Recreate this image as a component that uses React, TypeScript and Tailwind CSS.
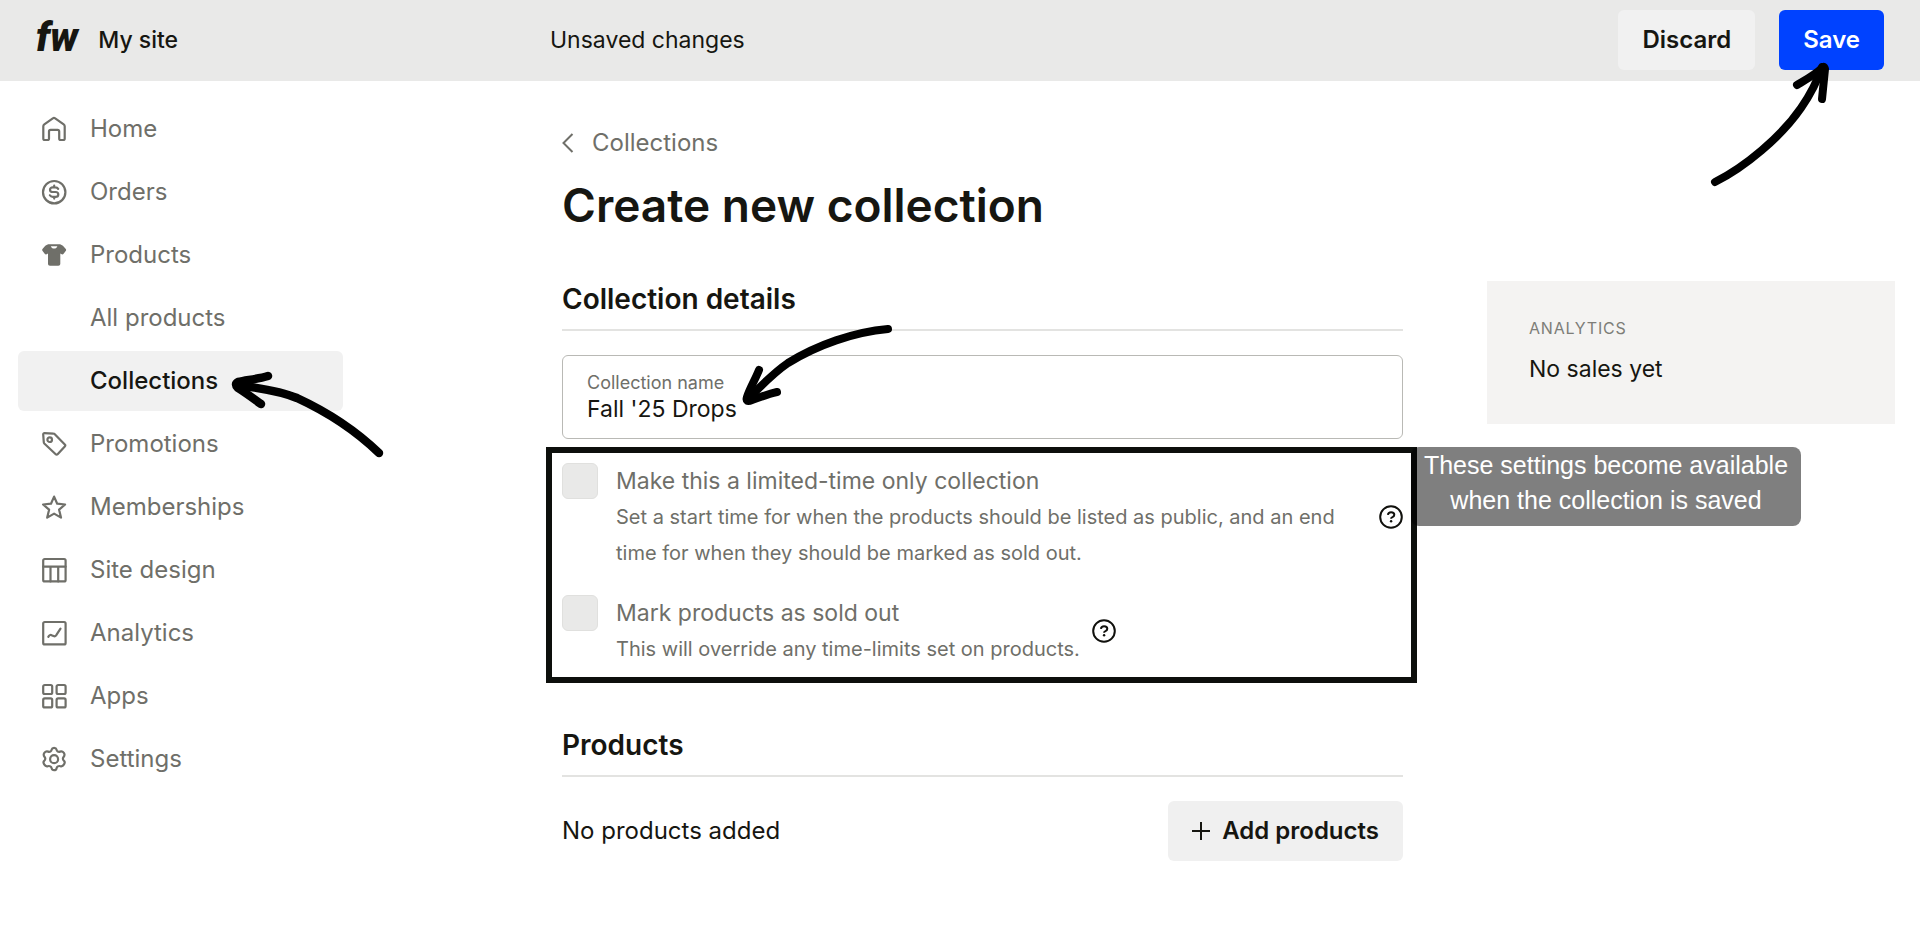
import React from "react";

type IconProps = { children: React.ReactNode };

const Icon = ({ children }: IconProps) => (
  <svg
    viewBox="0 0 26 26"
    className="size-[26px] shrink-0"
    fill="none"
    stroke="currentColor"
    strokeWidth="2.200"
    strokeLinecap="round"
    strokeLinejoin="round"
    aria-hidden="true"
  >
    {children}
  </svg>
);

const navItems = [
  {
    label: "Home",
    icon: (
      <path d="M2.300 10.200c0-.8.3-1.400 1-1.900l8.500-5.900c.7-.5 1.700-.5 2.400 0l8.500 5.900c.7.5 1 1.100 1 1.900V22.400c0 1-.6 1.600-1.600 1.600h-2.300c-1 0-1.600-.6-1.600-1.600v-7c0-1-.6-1.600-1.600-1.600H9.600c-1 0-1.600.6-1.600 1.600v7c0 1-.6 1.600-1.600 1.600H3.900c-1 0-1.600-.6-1.600-1.600z" />
    ),
  },
  {
    label: "Orders",
    icon: (
      <>
        <circle cx="13.200" cy="13.200" r="11.200" />
        <path d="M17.200 9.900c-.6-1-1.600-1.500-2.900-1.500h-2.600c-1.600 0-2.700.9-2.700 2.300s1.100 2.300 2.700 2.300h2.800c1.700 0 2.800.9 2.800 2.400s-1.100 2.400-2.800 2.400h-2.700c-1.300 0-2.300-.5-2.900-1.500M13.200 6.700v1.700M13.200 17.900v1.700" />
      </>
    ),
  },
  {
    label: "Products",
    icon: (
      <path
        fill="currentColor"
        stroke="none"
        fillRule="evenodd"
        d="M8.200 2.200h9.800c1.500 0 2.800.5 3.900 1.600l2.700 2.900c.7.700.7 1.600.1 2.400l-1.900 2.500c-.7.900-1.700 1.100-2.600.5l-.9-.5v10.200c0 1.200-.8 2-2 2H9c-1.200 0-2-.8-2-2V11.600l-.9.500c-.9.600-1.900.4-2.600-.5L1.600 9.100c-.6-.8-.6-1.700.1-2.400l2.600-2.900c1.100-1.100 2.400-1.600 3.900-1.600zM9.800 4.200c.6 1.600 1.700 2.300 3.300 2.300s2.700-.7 3.300-2.300z"
      />
    ),
  },
  { label: "All products", sub: true },
  { label: "Collections", sub: true, active: true },
  {
    label: "Promotions",
    icon: (
      <>
        <path d="M2.200 3.300c0-.7.5-1.200 1.200-1.200l9.200.5c.5 0 .9.200 1.200.6l10 10.400c.6.600.6 1.300 0 1.900l-7.200 7.700c-.6.600-1.300.6-1.900 0L3.300 12.500c-.3-.3-.5-.7-.5-1.200z" />
        <circle cx="8.700" cy="8.700" r="2.300" />
      </>
    ),
  },
  {
    label: "Memberships",
    icon: (
      <path d="M13.100 2.600l3.100 7.100 7.900.8-6 5.200 1.900 7.900-6.900-4-6.900 4 1.900-7.900-6-5.200 7.900-.8z" />
    ),
  },
  {
    label: "Site design",
    icon: (
      <>
        <rect x="2.200" y="2" width="22.400" height="22.400" rx="1.500" />
        <path d="M2.200 9.700h22.400M9.500 9.700v14.700M17.200 9.700v14.700" />
      </>
    ),
  },
  {
    label: "Analytics",
    icon: (
      <>
        <rect x="2.200" y="2" width="22.400" height="22.400" rx="1.500" />
        <path d="M7.300 16.900c1-1.700 2.200-2.400 3.300-1.700l1.900.9c1 .5 1.900.3 2.600-.7l4.400-6.700" />
      </>
    ),
  },
  {
    label: "Apps",
    icon: (
      <>
        <rect x="2.200" y="2" width="9" height="9" rx="1.500" />
        <rect x="15.600" y="2" width="9" height="9" rx="1.500" />
        <rect x="2.200" y="15.400" width="9" height="9" rx="1.500" />
        <rect x="15.600" y="15.400" width="9" height="9" rx="1.500" />
      </>
    ),
  },
  {
    label: "Settings",
    icon: (
      <>
        <path d="M10.700 3.600c.5-2.200 4.300-2.200 4.800 0 .3 1.700 1.900 2.600 3.500 2 2.100-.8 4 .6 4.400 2.500.5 2.300-1 2.500-1.400 4-.3 1.300.1 2 1 2.700 1.800 1.500-.6 6.300-3.600 5.400-1.900-.6-3.500.4-3.900 2.200-.5 2.400-4.300 2.400-4.800 0-.4-1.800-2-2.800-3.900-2.200-3 .9-5.400-3.900-3.600-5.400.9-.7 1.300-1.400 1-2.700-.4-1.500-1.900-1.700-1.400-4 .4-1.900 2.300-3.300 4.400-2.500 1.600.6 3.200-.3 3.500-2z" />
        <circle cx="13.100" cy="13.200" r="4" />
      </>
    ),
  },
];

const HelpIcon = () => (
  <svg viewBox="0 0 24 24" className="size-6" fill="none" stroke="currentColor" strokeWidth="2" aria-hidden="true">
    <circle cx="12" cy="12" r="10.800" />
    <path d="M8.900 9.900c.2-1.700 1.400-2.700 3.200-2.700 1.900 0 3.200 1 3.200 2.500 0 1.300-.8 1.900-1.800 2.400-1 .4-1.400.8-1.400 1.600" />
    <circle cx="12.100" cy="16.300" r="1.200" fill="currentColor" stroke="none" />
  </svg>
);

const Heading = ({ children }: { children: React.ReactNode }) => (
  <h2 className="border-b-2 border-[#e3e3e1] pb-3 text-[28px] leading-9 font-semibold">{children}</h2>
);

type SettingProps = { id: string; title: string; text: string; grow?: boolean };

const Setting = ({ id, title, text, grow }: SettingProps) => (
  <div className="flex items-center text-[#6f6f69]">
    <input
      id={id}
      type="checkbox"
      disabled
      className="size-9 shrink-0 appearance-none self-start rounded-md border border-[#e0e0de] bg-[#e9e9e8]"
    />
    <label htmlFor={id} className={grow ? "ml-[18px] flex-1 pr-8" : "ml-[18px] pr-3"}>
      <span className="block text-[23px] leading-9">{title}</span>
      <span className="block text-xl leading-9">{text}</span>
    </label>
    <button type="button" aria-label={"Help: " + title} className="text-[#11110d]">
      <HelpIcon />
    </button>
  </div>
);

const App = () => {
  return (
    <div className="min-h-screen bg-white font-[Inter,'Liberation_Sans',sans-serif] text-2xl text-[#161611]">
      <header className="flex h-[81px] items-start bg-[#e9e9e8] pt-2.5">
        <div className="flex h-[60px] w-[550px] items-center gap-5 pl-9 text-[23px]">
          <span className="pb-1 font-[Roboto,'Liberation_Sans',sans-serif] text-[40px] leading-9 font-black italic">fw</span>
          <span className="font-medium">My site</span>
        </div>
        <p className="flex-1 text-[23px] leading-[60px]">Unsaved changes</p>
        <div className="flex gap-6 pr-9">
          <button type="button" className="h-[60px] rounded-md bg-[#f1f1f1] px-6 font-semibold">
            Discard
          </button>
          <div className="relative">
            <button type="button" className="h-[60px] rounded-md bg-[#0042ff] px-6 font-semibold text-white">
              Save
            </button>
            <svg
              viewBox="0 0 124 134"
              className="absolute top-[50px] right-[51px] h-[134px] w-[124px]"
              fill="none"
              stroke="#000"
              strokeWidth="8"
              strokeLinecap="round"
              strokeLinejoin="round"
              aria-hidden="true"
            >
              <path d="M6 122C36 107 72 77 92 48C101 35 109 19 113 7" />
              <path d="M88 25C98 19 107 14 113 8Q115 5 116 9C115 19 114 29 113 39" />
            </svg>
          </div>
        </div>
      </header>

      <div className="flex items-start">
        <nav className="ml-[18px] w-[325px] shrink-0 pt-[18px]">
          <ul className="flex flex-col gap-[3px]">
            {navItems.map((item) => (
              <li key={item.label} className="relative">
                <a
                  href="#"
                  className={
                    item.active
                      ? "flex h-[60px] items-center rounded-md bg-[#f1f1f1] pl-[72px] font-medium"
                      : item.sub
                        ? "flex h-[60px] items-center pl-[72px] text-[#6f6f69]"
                        : "flex h-[60px] items-center gap-[23px] pl-[23px] text-[#6f6f69]"
                  }
                >
                  {item.icon && <Icon>{item.icon}</Icon>}
                  {item.label}
                </a>
                {item.active && (
                  <svg
                    viewBox="0 0 160 100"
                    className="absolute top-[17px] left-[210px] h-[100px] w-[160px]"
                    fill="none"
                    stroke="#000"
                    strokeWidth="8.500"
                    strokeLinecap="round"
                    strokeLinejoin="round"
                    aria-hidden="true"
                  >
                    <path d="M151 85C124 59 95 42 69 30C50 22 28 20 10 17" />
                    <path d="M40 8C30 11 19 12 10 14Q6 16 10 20C18 25 26 31 33 36" />
                  </svg>
                )}
              </li>
            ))}
          </ul>
        </nav>

        <main className="ml-[219px] min-w-0 flex-1 pt-11">
          <a href="#" className="flex items-center gap-[18px] leading-9 text-[#6f6f69]">
            <svg viewBox="0 0 12 20" className="h-5 w-3" fill="none" stroke="currentColor" strokeWidth="2" aria-hidden="true">
              <path d="M10.500 1L1.500 10L10.500 19" />
            </svg>
            Collections
          </a>
          <h1 className="mt-5 text-[46px] leading-[48px] font-semibold">Create new collection</h1>

          <section className="mt-[52px]">
            <Heading>Collection details</Heading>
            <div className="relative mt-6 flex h-[84px] flex-col justify-center rounded-md border border-[#b9b9b5] px-6">
              <label htmlFor="name" className="text-lg leading-6 text-[#6f6f69]">
                Collection name
              </label>
              <input
                id="name"
                type="text"
                defaultValue="Fall '25 Drops"
                className="h-7 w-full text-[23px] leading-7 outline-none"
              />
              <svg
                viewBox="0 0 160 90"
                className="absolute -top-[35px] left-[175px] h-[90px] w-[160px]"
                fill="none"
                stroke="#000"
                strokeWidth="8"
                strokeLinecap="round"
                strokeLinejoin="round"
                aria-hidden="true"
              >
                <path d="M150 8C116 11 79 24 50 42C34 53 22 66 10 78" />
                <path d="M21 49C17 59 12 67 9 76Q7 82 14 79C22 76 30 73 39 71" />
              </svg>
            </div>

            <div className="relative mt-2 -mr-3.5 -ml-4 flex flex-col gap-6 border-6 border-[#0d0f0c] py-2.5 pr-2 pl-2.5">
              <Setting
                id="limited"
                grow
                title="Make this a limited-time only collection"
                text="Set a start time for when the products should be listed as public, and an end time for when they should be marked as sold out."
              />
              <Setting
                id="sold-out"
                title="Mark products as sold out"
                text="This will override any time-limits set on products."
              />
              <p
                role="tooltip"
                className="absolute -top-1.5 left-full w-[390px] rounded-lg bg-black/50 pt-px pb-2 text-center font-['Liberation_Sans',Arial,sans-serif] text-[25px] leading-[35px] text-white"
              >
                These settings become available when the collection is saved
              </p>
            </div>
          </section>

          <section className="mt-11">
            <Heading>Products</Heading>
            <div className="mt-6 flex items-center justify-between">
              <p>No products added</p>
              <button type="button" className="flex h-[60px] items-center gap-3 rounded-md bg-[#f0f0f0] px-6 font-semibold">
                <svg viewBox="0 0 18 18" className="size-[18px]" stroke="currentColor" strokeWidth="2" aria-hidden="true">
                  <path d="M9 0V18M0 9H18" />
                </svg>
                Add products
              </button>
            </div>
          </section>
        </main>

        <aside className="mt-[200px] mr-[25px] ml-21 w-[408px] shrink-0 bg-[#f4f3f2] px-[42px] pt-[31px] pb-[35px]">
          <h3 className="text-base leading-8 tracking-wider text-[#7d7d78] uppercase">Analytics</h3>
          <p className="mt-[5px] text-[23px] leading-10">No sales yet</p>
        </aside>
      </div>
    </div>
  );
};

export default App;
